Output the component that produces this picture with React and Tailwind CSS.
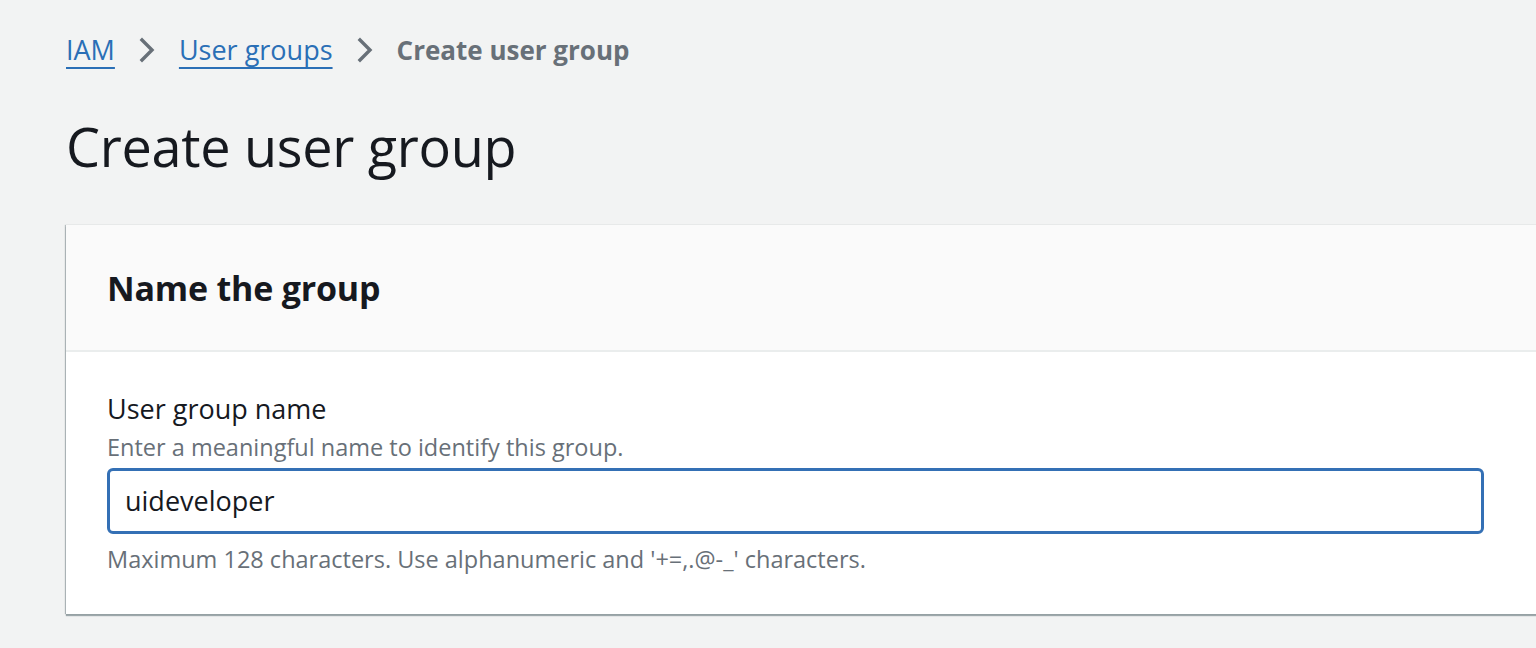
import React from 'react';

const Chevron = () => (
  <svg width="20" height="28" viewBox="0 0 20 28" fill="none" className="mx-[22px]">
    <path d="M5 4 L15 14 L5 24" stroke="#687078" strokeWidth="3.4" strokeLinecap="square" />
  </svg>
);

export default function App() {
  return (
    <div className="h-[648px] w-[1536px] overflow-hidden bg-[#f2f3f3] font-['Open_Sans',sans-serif]">
      <div className="pl-[66px] pt-[29px]">
        {/* breadcrumb */}
        <nav className="flex items-center h-[42px] text-[27px] leading-[40px]">
          <a className="text-[#2a6fb6] underline decoration-2 underline-offset-[7px]">IAM</a>
          <Chevron />
          <a className="text-[#2a6fb6] underline decoration-2 underline-offset-[7px]">User groups</a>
          <Chevron />
          <span className="text-[#687078] font-bold text-[26px]">Create user group</span>
        </nav>

        <h1 className="mt-[39px] text-[54px] leading-[72px] text-[#16191f] tracking-[-0.3px]">Create user group</h1>

        {/* card */}
        <div className="mt-[43px] -mr-6 bg-white shadow-[0_2px_1px_0_rgba(0,28,36,0.35),_-1px_0_1px_0_rgba(0,28,36,0.25)]">
          <div className="h-[127px] bg-[#fafafa] border-b-2 border-[#eaeded] flex items-center pl-[41px]">
            <h2 className="text-[34px] font-bold text-[#16191f] leading-[40px] tracking-[-0.2px]">Name the group</h2>
          </div>
          <div className="pl-[41px] pt-[38px] pb-[37px]">
            <div className="text-[27px] leading-[38px] text-[#16191f]">User group name</div>
            <div className="mt-[1px] text-[23.5px] leading-[36px] text-[#687078]">Enter a meaningful name to identify this group.</div>
            <div className="mt-[3px] w-[1377px] h-[66px] rounded-[6px] border-[3px] border-[#3470b5] flex items-center pl-[15px]">
              <span className="text-[27px] text-[#16191f]">uideveloper</span>
            </div>
            <div className="mt-[7px] text-[23.5px] leading-[36px] text-[#687078]">Maximum 128 characters. Use alphanumeric and '+=,.@-_' characters.</div>
          </div>
        </div>
      </div>
    </div>
  );
}
